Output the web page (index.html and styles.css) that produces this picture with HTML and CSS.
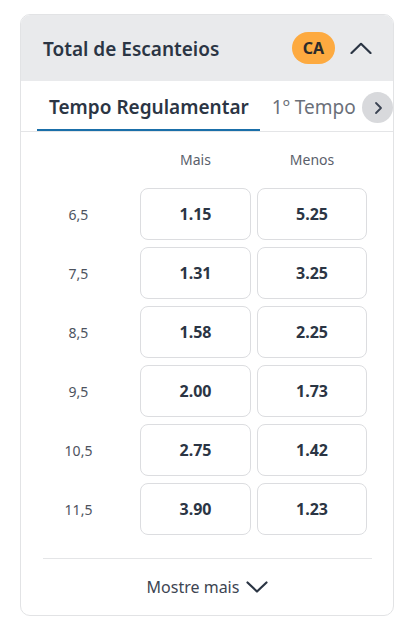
FILE: index.html
```html
<!DOCTYPE html>
<html lang="pt">
<head>
<meta charset="utf-8">
<link rel="stylesheet" href="styles.css">
</head>
<body>
<div class="card">
  <div class="card-header">
    <h2 class="title">Total de Escanteios</h2>
    <div class="header-right">
      <span class="badge">CA</span>
      <svg class="chev-up" width="22" height="12" viewBox="0 0 22 12"><path d="M1.5 11 L11 1.8 L20.5 11" fill="none" stroke="#2b3544" stroke-width="2.2" stroke-linecap="round" stroke-linejoin="round"/></svg>
    </div>
  </div>
  <div class="tabs">
    <div class="tab active">Tempo Regulamentar</div>
    <div class="tab">1º Tempo</div>
    <button class="tab-next" aria-label="Próximo">
      <svg width="10" height="14" viewBox="0 0 10 14"><path d="M3 2 L8 7 L3 12" fill="none" stroke="#3a4352" stroke-width="1.8" stroke-linecap="round" stroke-linejoin="round"/></svg>
    </button>
  </div>
  <div class="market">
    <div class="grid head">
      <span></span>
      <span class="colhead">Mais</span>
      <span class="colhead">Menos</span>
    </div>
    <div class="rows">
      <div class="grid row"><span class="line">6,5</span><button class="odd">1.15</button><button class="odd">5.25</button></div>
      <div class="grid row"><span class="line">7,5</span><button class="odd">1.31</button><button class="odd">3.25</button></div>
      <div class="grid row"><span class="line">8,5</span><button class="odd">1.58</button><button class="odd">2.25</button></div>
      <div class="grid row"><span class="line">9,5</span><button class="odd">2.00</button><button class="odd">1.73</button></div>
      <div class="grid row"><span class="line">10,5</span><button class="odd">2.75</button><button class="odd">1.42</button></div>
      <div class="grid row"><span class="line">11,5</span><button class="odd">3.90</button><button class="odd">1.23</button></div>
    </div>
    <div class="more">
      <span>Mostre mais</span>
      <svg width="22" height="12" viewBox="0 0 22 12"><path d="M1.5 1.5 L11 10.5 L20.5 1.5" fill="none" stroke="#2b3544" stroke-width="2.2" stroke-linecap="round" stroke-linejoin="round"/></svg>
    </div>
  </div>
</div>
</body>
</html>
```
FILE: styles.css
```css
* { box-sizing: border-box; }
html, body { margin: 0; padding: 0; background: #ffffff; }
body {
  font-family: "Noto Sans", "Open Sans", "Liberation Sans", sans-serif;
  color: #2b3544;
}
.card {
  margin: 14px 0 0 20px;
  width: 374px;
  border: 1px solid #e2e3e5;
  border-radius: 10px;
  overflow: hidden;
  background: #fff;
}
.card-header {
  height: 66px;
  background: #e9eaec;
  display: flex;
  align-items: center;
  justify-content: space-between;
  padding: 0 21px 0 22px;
}
.title {
  margin: 0;
  font-size: 19px;
  font-weight: 600;
  color: #2b3544;
  padding-top: 1px;
}
.header-right {
  display: flex;
  align-items: center;
  gap: 15px;
}
.badge {
  width: 43px;
  height: 32px;
  border-radius: 16px;
  background: #fdaa40;
  color: #2b2b2b;
  font-weight: 700;
  font-size: 16px;
  display: flex;
  align-items: center;
  justify-content: center;
}
.chev-up { display: block; }
.tabs {
  position: relative;
  height: 51px;
  border-bottom: 1px solid #e4e5e7;
  display: flex;
  padding-left: 16px;
  overflow: hidden;
  white-space: nowrap;
}
.tab {
  padding: 5px 11px 0 12px;
  font-size: 19px;
  line-height: 43px;
  height: 51px;
  color: #6b7079;
  border-bottom: 3px solid transparent;
  flex: none;
}
.tab.active {
  color: #2b3544;
  font-weight: 600;
  border-bottom-color: #1a6fa9;
}
.tab-next {
  position: absolute;
  right: 0;
  top: 11px;
  width: 31px;
  height: 31px;
  border-radius: 50%;
  border: none;
  background: #d8d9dc;
  display: flex;
  align-items: center;
  justify-content: center;
  padding: 0;
}
.market {
  padding: 0 21px 0 22px;
}
.grid {
  display: grid;
  grid-template-columns: 91px 111px 110px;
  column-gap: 6px;
  align-items: center;
}
.head {
  padding-top: 19px;
  margin-bottom: 19px;
  height: 37px;
}
.colhead {
  text-align: center;
  font-size: 14px;
  color: #5a606b;
  line-height: 18px;
}
.rows {
  display: flex;
  flex-direction: column;
  gap: 7px;
}
.row { height: 52px; }
.line {
  text-align: center;
  padding-right: 20px;
  font-size: 14px;
  color: #4d535e;
}
.odd {
  height: 52px;
  border: 1px solid #dcdde0;
  border-radius: 8px;
  background: #fff;
  font-family: inherit;
  font-size: 16px;
  font-weight: 700;
  color: #2b3544;
  padding: 0;
}
.more {
  margin-top: 23px;
  border-top: 1px solid #e4e5e7;
  height: 57px;
  display: flex;
  align-items: center;
  justify-content: center;
  gap: 7px;
  font-size: 16px;
  color: #3d4552;
}
.more svg { display: block; }
```
